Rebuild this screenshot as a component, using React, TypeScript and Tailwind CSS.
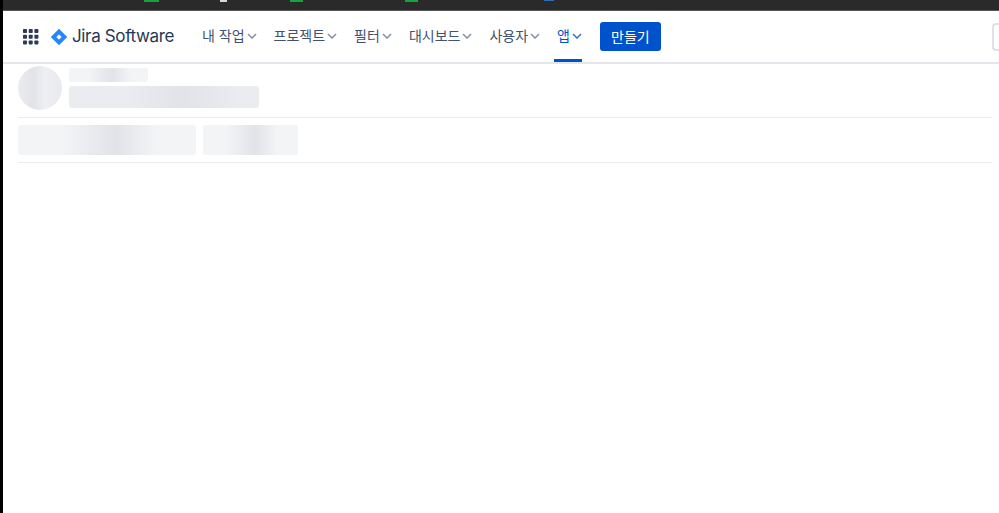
const menus = [
  { label: "내 작업", active: false },
  { label: "프로젝트", active: false },
  { label: "필터", active: false },
  { label: "대시보드", active: false },
  { label: "사용자", active: false },
  { label: "앱", active: true },
];

const shimmer =
  "bg-[linear-gradient(90deg,#f3f4f6_0%,#f3f4f6_25%,#e2e3e8_55%,#f3f4f6_78%,#f3f4f6_100%)]";

const GridIcon = () => (
  <svg width="16" height="16" viewBox="0 0 16 16" className="fill-[#2c3a57]">
    {[0, 5.7, 11.4].map((y) =>
      [0, 5.7, 11.4].map((x) => (
        <rect key={`${x}-${y}`} x={x} y={y} width="4" height="4" rx="0.8" />
      )),
    )}
  </svg>
);

const JiraMark = () => (
  <svg width="16" height="16" viewBox="0 0 16 16">
    <path
      d="M8 0 L16 8 L8 16 L0 8 Z M8 5.2 L5.2 8 L8 10.8 L10.8 8 Z"
      fill="#2684ff"
      fillRule="evenodd"
      stroke="#2684ff"
      strokeWidth="0.4"
      strokeLinejoin="round"
    />
  </svg>
);

const Chevron = ({ active }: { active: boolean }) => (
  <svg
    width="10"
    height="6"
    viewBox="0 0 10 6"
    fill="none"
    strokeWidth="1.6"
    className={`mt-[2px] ml-[2px] ${active ? "stroke-[#3b73d6]" : "stroke-[#8993a4]"}`}
  >
    <path d="M1 1 L5 5 L9 1" />
  </svg>
);

const App = () => {
  return (
    <div className="flex h-[513px] w-[999px] overflow-hidden bg-white font-['Inter','Noto_Sans_CJK_KR',sans-serif]">
      <div className="w-[3px] shrink-0 bg-black" />
      <div className="flex min-w-0 flex-1 flex-col">
        {/* window top strip */}
        <div className="flex h-[11px] shrink-0 items-start border-b border-[#55565a] bg-[#2a2a2a]">
          <div className="ml-[141px] h-[2px] w-[15px] bg-[#12a53c]" />
          <div className="ml-[61px] h-[2px] w-[7px] bg-[#d8d8d8]" />
          <div className="ml-[63px] h-[2px] w-[13px] bg-[#12a53c]" />
          <div className="ml-[102px] h-[2px] w-[13px] bg-[#12a53c]" />
          <div className="ml-[126px] h-[1px] w-[10px] bg-[#2f6fb5]" />
        </div>

        {/* nav */}
        <div className="flex h-[53px] shrink-0 items-center border-b-2 border-[#e4e6ec] pl-[20px]">
          <GridIcon />
          <div className="ml-[12px] flex items-center gap-[5px]">
            <JiraMark />
            <span className="mb-[1px] w-[102px] text-[17px] leading-none font-normal tracking-[-0.35px] whitespace-nowrap text-[#253858]">
              Jira Software
            </span>
          </div>
          <div className="ml-[25px] flex h-full items-stretch gap-[14px]">
            {menus.map((menu) => (
              <div
                key={menu.label}
                className={`flex items-center border-b-[3px] pl-[3px] text-[14px] whitespace-nowrap ${menu.active ? "border-[#0052cc] text-[#0052cc]" : "border-transparent text-[#42526e]"}`}
              >
                {menu.label}
                <Chevron active={menu.active} />
              </div>
            ))}
          </div>
          <button className="ml-[18px] flex h-[29px] w-[61px] items-center justify-center rounded-[3px] bg-[#0052cc] text-[14px] font-normal text-white">
            만들기
          </button>
          <div className="ml-auto h-[28px] w-[7px] rounded-l-[4px] border-y-2 border-l-2 border-[#dfe1e6]" />
        </div>

        {/* skeleton body */}
        <div className="pr-[7px] pl-[15px]">
          <div className="flex h-[54px] items-start gap-[7px] border-b border-[#ebecf0] pt-[2px]">
            <div className="h-[44px] w-[44px] rounded-full bg-[linear-gradient(90deg,#ebecf0_0%,#e2e3e8_35%,#eeeff2_60%,#e8e9ed_100%)]" />
            <div className="flex flex-col gap-[4px] pt-[2px]">
              <div className={`h-[14px] w-[79px] rounded-[3px] ${shimmer}`} />
              <div className="h-[22px] w-[190px] rounded-[3px] bg-[linear-gradient(90deg,#ebecf0_0%,#ebecf0_30%,#e2e3e8_60%,#ebecf0_90%)]" />
            </div>
          </div>
          <div className="flex h-[45px] items-start gap-[7px] border-b border-[#ebecf0] pt-[7px]">
            <div className={`h-[30px] w-[178px] rounded-[3px] ${shimmer}`} />
            <div className={`h-[30px] w-[95px] rounded-[3px] ${shimmer}`} />
          </div>
        </div>
      </div>
    </div>
  );
};

export default App;
